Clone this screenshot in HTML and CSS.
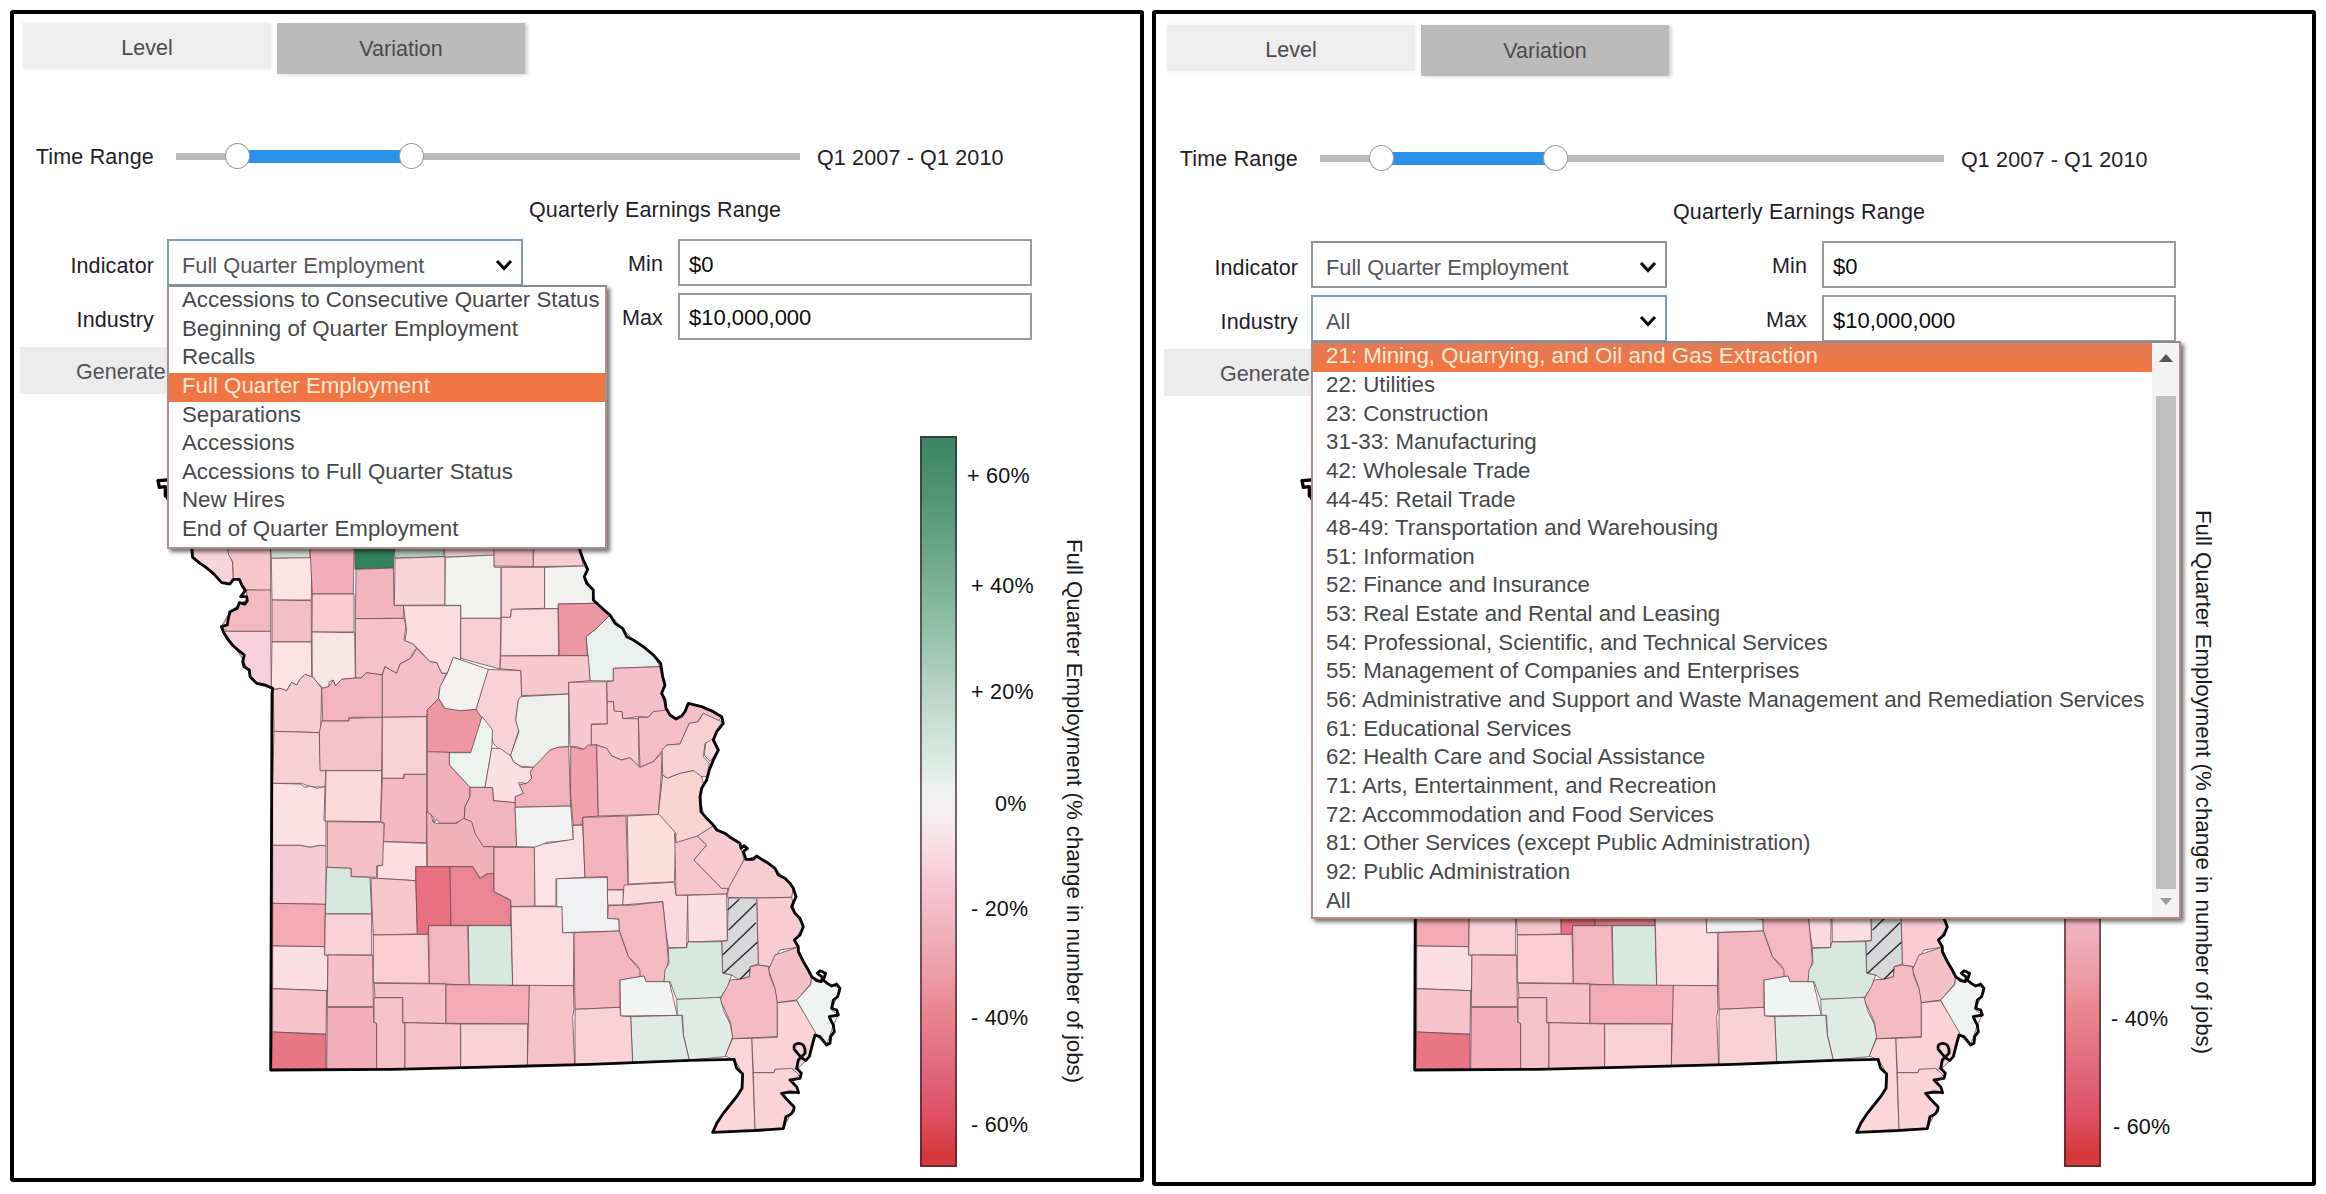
FILE: index.html
```html
<!DOCTYPE html>
<html lang="en">
<head>
<meta charset="utf-8">
<title>Employment Explorer</title>
<link rel="stylesheet" href="styles.css">
</head>
<body>
<svg class="defs" width="0" height="0" aria-hidden="true">
  <defs>
    <symbol id="state" viewBox="0 -12 2250 2190">
      <g stroke="#6b4a54" stroke-width="2.4" stroke-linejoin="round">
        <!-- northwest counties -->
        <g>
          <path fill="#f8d5dd" d="M130 325H232L240 345 248 370 250 415 240 432 215 428 165 380 128 352Z"/>
          <path fill="#f5c6cc" d="M232 325H362V452L290 450 268 418 250 415 248 365 236 345Z"/>
          <path fill="#f2bbc2" d="M290 450H362V574H232L214 560 240 515 270 490 290 480Z"/>
          <path fill="#f8d0dc" d="M222 574H362L364 745 320 730 298 700 280 660Z"/>
          <path fill="#d0ddd5" d="M362 325H480V355H364Z"/>
          <path fill="#fce4e4" d="M364 355L485 353 484 480H366Z"/>
          <path fill="#f1bdc6" d="M366 480L484 482V606H366Z"/>
          <path fill="#fce4e4" d="M366 606H484L485 712 465 703 450 718 440 735 425 727 410 752 390 745 370 748 364 745Z"/>
          <path fill="#f2afb9" d="M480 325H612L610 462H487Z"/>
          <path fill="#f7cdd1" d="M487 462H612V576H486Z"/>
          <path fill="#f9e5e4" d="M486 576L614 578 616 714 575 718 556 738 550 720 538 725 536 740 520 745 487 714Z"/>
          <path fill="#32805c" d="M614 325H733L730 384 615 388Z"/>
          <path fill="#f3b5bd" d="M618 388L730 384 732 495 760 497 762 535 616 536Z"/>
          <path fill="#f5c2ca" d="M616 536L762 535 768 560 762 600 790 612 800 625 788 640 782 655 750 672 740 700 720 690 705 680 697 704 670 702 650 698 634 714H617Z"/>
          <path fill="#b5c8bf" d="M733 325H882V350L735 355Z"/>
          <path fill="#f7d5d8" d="M735 355L885 350V495L733 496Z"/>
          <path fill="#eccacd" d="M882 325H1033V346L885 352Z"/>
          <path fill="#f1f1ef" d="M886 352L1033 345V382H1053V535H932V496H885Z"/>
          <path fill="#fbdde2" d="M760 497H932V660L910 652 892 700 875 700 860 668 840 665 825 650 808 630 790 612 765 602 770 570Z"/>
          <path fill="#f7ced5" d="M932 535H1053L1050 687 932 655Z"/>
          <path fill="#f6cdd2" d="M370 750L390 745 410 752 425 727 440 735 450 718 465 703 490 712 515 745 512 878 372 874Z"/>
          <path fill="#f3b6be" d="M515 745L536 740 550 720 556 738 575 718 616 714 634 714 650 698 697 705V832H597V843H518Z"/>
          <path fill="#f3bec8" d="M697 704L705 680 740 700 750 672 782 655 800 625 825 650 840 665 860 668 875 700 890 700 868 750 866 775 832 810 830 830 697 832Z"/>
          <path fill="#f7d0d5" d="M372 874L508 878 512 990 528 992 525 1042 480 1040 455 1030H368Z"/>
          <path fill="#f3c3ca" d="M515 843H597V835L697 832 695 992H510L508 878Z"/>
          <path fill="#f7d2d4" d="M697 832L830 830V1003H762L760 1015H697Z"/>
          <path fill="#ec97a1" d="M832 810L866 775 880 800 930 812 975 808 1000 828 965 937H832Z"/>
        </g>
        <!-- northeast and river counties -->
        <g transform="translate(810 270)">
          <path fill="#f0c0c6" d="M222 55H340V110L222 108Z"/>
          <path fill="#f5cdd3" d="M340 55H478L490 108 340 110Z"/>
          <path fill="#fad6da" d="M244 112H374V235L274 238 272 262H244Z"/>
          <path fill="#f2f2f0" d="M374 112L490 108 503 118 493 140 520 180 522 220 415 222 414 236H374Z"/>
          <path fill="#fadbdf" d="M274 238L414 236 416 376 242 378 244 262H272Z"/>
          <path fill="#e9f0ee" d="M570 255L608 295 640 330 700 375 720 410 580 415V453L510 452 498 320 530 295Z"/>
          <path fill="#ec97a1" d="M415 222L525 220 550 238 570 255 530 295 498 320 503 377 417 376Z"/>
          <path fill="#f5c9cf" d="M242 378L505 377 510 452 446 457V492L305 497 302 422 240 416Z"/>
          <path fill="#f8d2d8" d="M203 418L302 422 305 500 295 510 287 570 297 600 280 650 272 678 240 660 220 640 210 600 168 538Z"/>
          <path fill="#eeeeec" d="M302 500L446 492V650L415 652 390 660 365 690 340 712 300 708 280 695 272 675 297 605 287 570 295 510Z"/>
          <path fill="#f6c8d1" d="M446 457L560 455 562 582H514V645L490 658 470 650H450Z"/>
          <path fill="#f3bfcb" d="M580 415L718 410 735 465 725 490 738 540 725 552 700 545 685 562 655 560 608 566 606 545H582L580 515H562L560 455 580 453Z"/>
          <path fill="#f6c8cf" d="M514 584L562 582V515H580L582 543 606 545 608 566H655L657 712 630 683 605 690 575 678 560 655 530 645H514Z"/>
          <path fill="#f3bec6" d="M655 562L685 562 700 545 738 540 768 567 795 545 805 520 845 530 905 560 890 580 850 550 830 578 808 580 780 642 740 645 700 695 660 712Z"/>
          <path fill="#f7d0d6" d="M850 550L905 575 880 630 855 640 850 680 868 700 860 740H825L820 722 780 730 742 745 728 735 726 660 740 645 780 642 808 580 835 575Z"/>
          <path fill="#fbdadf" d="M880 625L895 660 870 695 853 675 857 640Z"/>
          <path fill="#f2a0ab" d="M452 650L490 658 505 645H530L535 858 488 862 486 885H460L452 800Z"/>
          <path fill="#f5bfc5" d="M530 645L560 655 575 678 605 690 630 683 660 712 700 695 726 668 724 735 715 853 535 858Z"/>
          <path fill="#f2b3bc" d="M446 650L452 828 285 832V800L310 790 295 765 320 760 335 745 330 725 340 712 390 660 415 652Z"/>
          <path fill="#f7d4cf" d="M728 735L742 745 780 730 820 722 845 740 850 760 842 810 850 850 880 888 835 918 767 942 765 910 740 885 715 853Z"/>
          <path fill="#ecf3ef" d="M186 560L218 600 215 660 195 772H150L88 705V668H152Z"/>
          <path fill="#fbe0e3" d="M215 655L240 655 272 678 280 695 305 712H340L330 725 335 745 320 760 295 758 310 790 285 800V818L220 812 218 775 195 772Z"/>
          <path fill="#f1b1bc" d="M22 665L88 667V705L150 772V800L135 830 133 865 105 880H60L50 868 40 882 42 862 22 850Z"/>
          <path fill="#f2b5bd" d="M150 772L218 773 220 812 285 818 290 950H190L165 915 155 880 133 865 135 830 150 800Z"/>
          <path fill="#f1f1f1" d="M285 832L452 828 460 930 380 937 355 952 290 950Z"/>
          <path fill="#f3f2f0" d="M100 382L205 418 168 538 120 542 75 535 56 505 60 470 82 430Z"/>
        </g>
        <!-- southwest counties -->
        <g transform="translate(300 900)">
          <path fill="#fbe0e4" d="M68 130L150 132 165 142 180 138 200 145 225 140 222 242 228 245V318L210 316 180 322 150 316H68Z"/>
          <path fill="#fad9da" d="M228 92H395L392 245 225 243Z"/>
          <path fill="#f3b8c1" d="M397 115H462V103H530V308L400 305 402 250 392 245Z"/>
          <path fill="#f2b2ba" d="M530 215L545 225 548 245 560 250H620L640 235 665 245 675 280 700 320H732V400L710 402 690 415 668 380H532Z"/>
          <path fill="#f4c0c6" d="M232 245L392 247 402 250 400 375 380 378V412L303 410V385L232 382Z"/>
          <path fill="#fcdde2" d="M400 305L530 310V380H498L497 422 382 415V378L398 376Z"/>
          <path fill="#f4cbd6" d="M68 316H150L180 322 210 316 228 318V493L68 490Z"/>
          <path fill="#d5e7df" d="M230 382L303 385V410L360 412 365 522H226Z"/>
          <path fill="#f5c7ca" d="M363 415H382L497 422 502 582 370 585 365 480Z"/>
          <path fill="#e8707f" d="M497 380H600L603 556H536L534 583H502Z"/>
          <path fill="#ea8592" d="M600 380H668L690 415 710 402 732 400V455L782 482V556H603Z"/>
          <path fill="#f5bdc5" d="M732 322H853L855 498 783 500 782 480 732 455Z"/>
          <path fill="#fbe2e7" d="M853 322L880 312 970 298 968 256H998L1005 412 918 417V498H855Z"/>
          <path fill="#f3aab2" d="M68 490L226 493 224 620 68 618Z"/>
          <path fill="#fbdfe5" d="M68 618L224 620V645H234L232 752 68 746Z"/>
          <path fill="#f8d0d7" d="M226 522H365V645H224Z"/>
          <path fill="#f5c0c9" d="M234 645L368 646 370 800H232Z"/>
          <path fill="#f8ced1" d="M370 585L534 583 538 730 370 728Z"/>
          <path fill="#f3b5be" d="M536 557H653L658 735 538 730Z"/>
          <path fill="#d7e8df" d="M655 557H783L788 737 658 735Z"/>
          <path fill="#fadbdf" d="M783 500H938V578H972L970 737H788Z"/>
          <path fill="#f6c3cb" d="M68 746L230 752 228 882 68 876Z"/>
          <path fill="#e87683" d="M68 876L228 884V990H64Z"/>
          <path fill="#f3afba" d="M232 802H370L372 847 380 850V988H230Z"/>
          <path fill="#f5c0c8" d="M372 730L588 732V850L458 848V773H375Z"/>
          <path fill="#f5c2ca" d="M372 773H458V848L465 850V986L380 988V850L372 847Z"/>
          <path fill="#f2abb5" d="M588 734L838 736V852L588 850Z"/>
          <path fill="#f5c2c9" d="M465 848L632 852V985L465 986Z"/>
          <path fill="#f8d2d5" d="M632 852H833L832 980 632 985Z"/>
          <path fill="#f5c2c8" d="M838 736L970 737 972 810 968 830 974 975 832 980Z"/>
        </g>
        <!-- southeast counties and bootheel -->
        <g transform="translate(1170 1020)">
          <path fill="#f2b3bc" d="M128 112L258 108 265 328 202 330V290L135 292Z"/>
          <path fill="#fce0dc" d="M262 108L357 103 408 160 403 305 265 312Z"/>
          <path fill="#fbe0e5" d="M202 330H250V375H203Z"/>
          <path fill="#f0f0f2" d="M50 296L202 292V330L203 377V415L237 417 238 453 68 458 66 380H50Z"/>
          <path fill="#f6c4cc" d="M404 160L408 188 472 168 500 195 462 240 545 325 565 320 560 342 408 346Z"/>
          <path fill="#f7cbd2" d="M472 168L520 138 555 160 600 190 612 240 568 325 545 325 462 240 500 195Z"/>
          <path fill="#f7cdd4" d="M612 240L650 228 705 265 760 325 755 352 650 354 560 352 568 320Z"/>
          <path fill="#fadadf" d="M252 315L403 307 408 346H443L440 503H385L378 460 368 365 248 375Z"/>
          <path fill="#fbdfe4" d="M443 346L560 342 562 482 445 486Z"/>
          <path fill="#f7ccd2" d="M650 354L755 352 765 400 790 440 763 480 772 502 720 510 690 560 655 555Z"/>
          <path fill="#f5c0c8" d="M772 502L815 590 812 612 770 660 712 668 700 610 685 570 705 525Z"/>
          <path fill="#f4bbc4" d="M655 555L685 560 690 590 705 625 712 668V770L578 776 572 730 555 690 540 660 570 600 600 598 628 590 630 560Z"/>
          <path fill="#d8d8da" d="M565 354H650L655 552 630 560 628 590 595 598 575 585 548 580 545 485 562 482Z"/>
          <path fill="none" stroke="#26262a" stroke-width="4" d="M563 390L598 358M566 450L648 370M548 525L648 428M548 582L652 487M600 598L630 568"/>
          <path fill="#eff4f2" d="M770 660L812 615 815 590 862 610 900 625 875 690 895 705 880 735 860 795 825 765Z"/>
          <path fill="#f9d3d7" d="M712 668L770 662 828 760 810 830 780 860 755 870 705 868 702 878H640L635 775 712 772Z"/>
          <path fill="#fad5da" d="M578 776L635 775 645 1048 518 1057 560 985 608 925V882L585 840 555 828Z"/>
          <path fill="#f9d3d8" d="M640 878H702L705 868 755 865 778 885 760 905 778 938H725L762 980 730 1046 645 1048Z"/>
          <path fill="#f4bac2" d="M205 377L280 375 368 365 378 460 385 540 372 605H318L312 588 300 590 295 560 265 530 238 453 237 417 203 415Z"/>
          <path fill="#f3b6be" d="M102 458L238 453 265 530 300 570V590L240 600V682L105 688Z"/>
          <path fill="#f1f4f3" d="M240 600L312 588 318 605H388L412 706 242 708Z"/>
          <path fill="#d8e8df" d="M385 505L440 503 443 486 545 485 548 580 575 585 562 620 540 655 410 658 390 605 372 605 375 570 387 550Z"/>
          <path fill="#dfece6" d="M410 658L540 652 552 695 570 730 578 770 555 830 448 840 430 765 428 706H412Z"/>
          <path fill="#dfece6" d="M272 710L425 706 430 765 448 842 278 848Z"/>
          <path fill="#f9d2d7" d="M105 688L240 682 242 708 272 710 278 850 105 855Z"/>
        </g>
      </g>
      <!-- state border -->
      <g fill="none" stroke="#08060a" stroke-width="8.5" stroke-linejoin="round" stroke-linecap="round">
        <path stroke-width="10" d="M46 168V140L28 142 24 122 50 120"/>
        <path d="M50 170L90 250 125 325 128 352 150 370 165 380 190 400 215 428 240 432 250 418H268L275 435 286 452 272 470 290 470 292 482 285 492 268 488 262 505 240 515 235 535 232 555 214 560 222 580 235 600 250 618 270 635 283 645 278 665 282 680 298 690 300 710 320 730 345 735 368 745 366 760 362 1890 730 1888 1060 1880 1320 1873 1620 1861 1752 1858"/>
        <g transform="translate(1170 1020)">
          <path d="M582 838L590 865 608 882 606 925 590 950 570 975 550 1000 530 1030 518 1057 640 1052 730 1046 738 1010Q765 1000 762 980L742 960 725 940 750 936 776 938 770 920 750 900 780 895 784 880 770 865 775 840 795 820Q797 792 778 790 758 790 763 808L783 832 797 842 808 830 818 790 825 765 840 770 860 795 870 790 872 770 883 755 880 735 872 720 868 710 895 705 890 690 875 685 880 660 893 650 900 625 890 612 875 618 862 610 850 600 857 580 840 572 832 580 848 592 843 605 830 602 815 590 805 570 790 545 775 515 775 500 763 480 780 465 790 440 780 415 765 400 755 380 768 350 760 325 750 310 735 295 715 285 705 265 685 250 665 238 650 228 640 238 618 238 610 215 622 205 612 197 603 205 600 190 575 175 555 160 530 150 520 135 500 115 483 95 480 50 485 25 500 0"/>
        </g>
        <g transform="translate(810 270)">
          <path d="M860 750L868 720 880 690 895 660 880 630 890 605 910 580 905 560 880 545 845 530 805 520 795 545 785 558 768 567 750 555 738 535 735 510 725 490 735 465 728 440 722 400 700 375 670 350 640 330 620 320 608 295 585 280 570 255 550 238 520 210V180L500 160 493 140 503 118 490 90 480 62 478 20"/>
        </g>
      </g>
    </symbol>
    <symbol id="chevron" viewBox="0 0 18 12"><path d="M2 2L9 9.5 16 2" fill="none" stroke="#0c0c0c" stroke-width="3.2"/></symbol>
  </defs>
</svg>

<main class="page">
  <section class="panel">
    <nav class="tabs"><span class="tab">Level</span><span class="tab tab-on">Variation</span></nav>
    <div class="time">
      <span class="label">Time Range</span>
      <div class="track"><i class="fill"></i><i class="thumb thumb-a"></i><i class="thumb thumb-b"></i></div>
      <span class="value">Q1 2007 - Q1 2010</span>
    </div>
    <h2 class="heading">Quarterly Earnings Range</h2>
    <div class="form">
      <span class="label low">Indicator</span>
      <div class="picker">
        <div class="select focus"><span>Full Quarter Employment</span><svg class="chev"><use href="#chevron"/></svg></div>
        <ul class="menu menu-indicator">
          <li>Accessions to Consecutive Quarter Status</li>
          <li>Beginning of Quarter Employment</li>
          <li>Recalls</li>
          <li class="on">Full Quarter Employment</li>
          <li>Separations</li>
          <li>Accessions</li>
          <li>Accessions to Full Quarter Status</li>
          <li>New Hires</li>
          <li>End of Quarter Employment</li>
        </ul>
      </div>
      <span class="label">Min</span><div class="input">$0</div>
      <span class="label low">Industry</span>
      <div class="select"></div>
      <span class="label">Max</span><div class="input up">$10,000,000</div>
    </div>
    <div class="generate">Generate</div>
    <div class="viz">
      <svg class="map"><use href="#state"/></svg>
      <div class="bar"></div>
      <div class="ticks"><span class="t60">+ 60%</span><span>+ 40%</span><span>+ 20%</span><span class="t0">0%</span><span>- 20%</span><span>- 40%</span><span>- 60%</span></div>
      <div class="axis">Full Quarter Employment (% change in number of jobs)</div>
    </div>
  </section>

  <section class="panel panel-industry">
    <nav class="tabs"><span class="tab">Level</span><span class="tab tab-on">Variation</span></nav>
    <div class="time">
      <span class="label">Time Range</span>
      <div class="track"><i class="fill"></i><i class="thumb thumb-a"></i><i class="thumb thumb-b"></i></div>
      <span class="value">Q1 2007 - Q1 2010</span>
    </div>
    <h2 class="heading">Quarterly Earnings Range</h2>
    <div class="form">
      <span class="label low">Indicator</span>
      <div class="select"><span>Full Quarter Employment</span><svg class="chev"><use href="#chevron"/></svg></div>
      <span class="label">Min</span><div class="input">$0</div>
      <span class="label low">Industry</span>
      <div class="picker">
        <div class="select focus"><span>All</span><svg class="chev"><use href="#chevron"/></svg></div>
        <div class="menu menu-industry">
          <ul class="options">
            <li class="on">21: Mining, Quarrying, and Oil and Gas Extraction</li>
            <li>22: Utilities</li>
            <li>23: Construction</li>
            <li>31-33: Manufacturing</li>
            <li>42: Wholesale Trade</li>
            <li>44-45: Retail Trade</li>
            <li>48-49: Transportation and Warehousing</li>
            <li>51: Information</li>
            <li>52: Finance and Insurance</li>
            <li>53: Real Estate and Rental and Leasing</li>
            <li>54: Professional, Scientific, and Technical Services</li>
            <li>55: Management of Companies and Enterprises</li>
            <li>56: Administrative and Support and Waste Management and Remediation Services</li>
            <li>61: Educational Services</li>
            <li>62: Health Care and Social Assistance</li>
            <li>71: Arts, Entertainment, and Recreation</li>
            <li>72: Accommodation and Food Services</li>
            <li>81: Other Services (except Public Administration)</li>
            <li>92: Public Administration</li>
            <li>All</li>
          </ul>
          <div class="scroll"><i class="arrow-up"></i><i class="grip"></i><i class="arrow-down"></i></div>
        </div>
      </div>
      <span class="label">Max</span><div class="input">$10,000,000</div>
    </div>
    <div class="generate">Generate</div>
    <div class="viz">
      <svg class="map"><use href="#state"/></svg>
      <div class="bar"></div>
      <div class="ticks"><span></span><span></span><span></span><span></span><span></span><span>- 40%</span><span class="last">- 60%</span></div>
      <div class="axis">Full Quarter Employment (% change in number of jobs)</div>
    </div>
  </section>
</main>
</body>
</html>
```
FILE: styles.css
```css
* { box-sizing: border-box; }
body {
  margin: 0;
  background: #fff;
  color: #232028;
  font: 21.5px/26px "Liberation Sans", Arial, sans-serif;
}
ul { list-style: none; margin: 0; padding: 0; }
.defs { position: absolute; }

.page { display: flex; align-items: flex-start; gap: 8px; padding: 10px; }
.panel {
  display: flex;
  flex-direction: column;
  flex: none;
  width: 1134px;
  height: 1172px;
  border: 4px solid #000;
  border-radius: 3px;
  overflow: hidden;
}
.panel-industry { width: 1164px; height: 1176px; padding: 2px 0 0 2px; }

.tabs { display: flex; gap: 6px; height: 51px; margin: 9px 0 0 9px; }
.tab {
  display: flex;
  align-items: center;
  justify-content: center;
  width: 248px;
  height: 46px;
  padding-top: 4px;
  background: #eee;
  color: #4c4a4c;
  box-shadow: 0 0 4px rgba(0, 0, 0, .08);
}
.tab-on { height: 51px; padding-top: 0; background: #bcbbbc; box-shadow: 3px 1px 3px rgba(0, 0, 0, .16); }

.time { display: flex; align-items: center; height: 40px; margin-top: 62px; }
.label { width: 140px; text-align: right; letter-spacing: .12px; }
.time .label { padding-top: 2px; letter-spacing: .2px; }
.track { position: relative; width: 624px; height: 7px; margin-left: 22px; background: #bababa; }
.fill { position: absolute; left: 62px; top: -3px; width: 174px; height: 13px; background: #2b92e9; }
.thumb {
  position: absolute;
  top: -9.5px;
  width: 25px;
  height: 26px;
  border: 1.5px solid #9c9a9e;
  border-radius: 50%;
  background: #fff;
}
.thumb-a { left: 49px; }
.thumb-b { left: 223px; }
.value { margin-left: 17px; padding-top: 3px; letter-spacing: .15px; }

.heading { height: 30px; margin: 20px 0 13px 515px; font-size: 21.5px; font-weight: 400; line-height: 29px; letter-spacing: .15px; }

.form {
  display: grid;
  grid-template-columns: 140px 356px 140px 354px;
  grid-template-rows: 47px 47px;
  row-gap: 7px;
  align-items: center;
}
.form .label { padding-top: 2px; }
.form .low { padding-top: 6px; }
.form .input { margin-left: 28px; width: 354px; }
.form .select, .form .picker { margin-left: 13px; width: 356px; }
.form .label:nth-child(4n + 3) { margin-left: 13px; }
.picker { position: relative; height: 47px; }
.form .picker .select { margin-left: 0; }
.select, .input { display: flex; align-items: center; height: 47px; padding: 6px 8px 0 13px; border: 2px solid #9b9a9e; background: #fff; }
.select { justify-content: space-between; color: #55545a; font-size: 21.8px; border-color: #8e949b; }
.focus { border-color: #7c9dba; }
.input { padding: 4px 8px 0 9px; color: #0c0c0c; font-size: 22px; }
.up { padding-top: 2px; }
.chev { width: 18px; height: 12px; margin-top: -2px; }

.menu {
  position: absolute;
  z-index: 2;
  top: 46px;
  left: 0;
  border: 2px solid #aa8e90;
  border-top-color: #8e8c92;
  background: #fff;
  box-shadow: 3px 3px 4px rgba(0, 0, 0, .55);
  color: #48484b;
  font-size: 22.3px;
  white-space: nowrap;
}
.menu li { height: 28.65px; padding-left: 13px; line-height: 26px; }
.menu .on { background: #f07545; color: #ffe9d2; }
.menu-indicator { width: 440px; height: 264px; }
.menu-industry { display: flex; width: 870px; height: 578px; border-bottom-color: #c08878; }
.options { width: 839px; }
.menu-industry .on { height: 29px; background: linear-gradient(#e17a55, #f57540); }
.scroll { display: flex; flex-direction: column; align-items: center; flex: 1; background: #f3f3f3; }
.arrow-up { margin: 11px 0 34px; border: 7px solid transparent; border-top: 0; border-bottom: 8px solid #555; }
.grip { width: 20px; height: 493px; background: #bfbfbf; }
.arrow-down { margin-top: 9px; border: 6.5px solid transparent; border-bottom: 0; border-top: 7px solid #9a9a9a; }

.generate { width: 248px; height: 47px; margin: 7px 0 0 6px; padding: 12px 0 0 56px; background: #ececed; color: #525155; }

.viz { display: flex; height: 731px; margin-top: 42px; }
.panel-industry .viz { margin-top: 40px; }
.map { flex: none; width: 750px; height: 730px; margin-left: 136px; }
.bar {
  flex: none;
  width: 37px;
  height: 731px;
  margin-left: 20px;
  border: 2px solid rgba(50, 30, 40, .65);
  background: linear-gradient(#3c8465, #4c9273 7%, #6ba68a 16%, #8fbfa9 26%, #b5d2c5 34%, #d0e6dc 42%, #ecf0ee 48%, #f3f0f1 51%, #f8dee4 56%, #f6c8d6 61%, #f0b0bd 68%, #ed9ca5 74%, #e8858d 79%, #e0677a 87%, #df5064 93%, #d5393c 98%) border-box;
}
.ticks {
  display: grid;
  flex: none;
  grid-template-rows: 110px 106px 112px 105px 109px 107px 26px;
  width: 70px;
  margin: 27px 0 0 14px;
  color: #111;
  letter-spacing: .25px;
}
.ticks .t60 { margin-left: -4px; }
.ticks .t0 { margin-left: 24px; }
.axis { height: 560px; margin: 103px 0 0 20px; writing-mode: vertical-rl; white-space: nowrap; font-size: 22.25px; color: #1b1b1b; }
.panel-industry .ticks { margin: 28px 0 0 10px; }
.ticks .last { padding: 1px 0 0 2px; }
.panel-industry .axis { margin: 74px 0 0 9px; }
```
